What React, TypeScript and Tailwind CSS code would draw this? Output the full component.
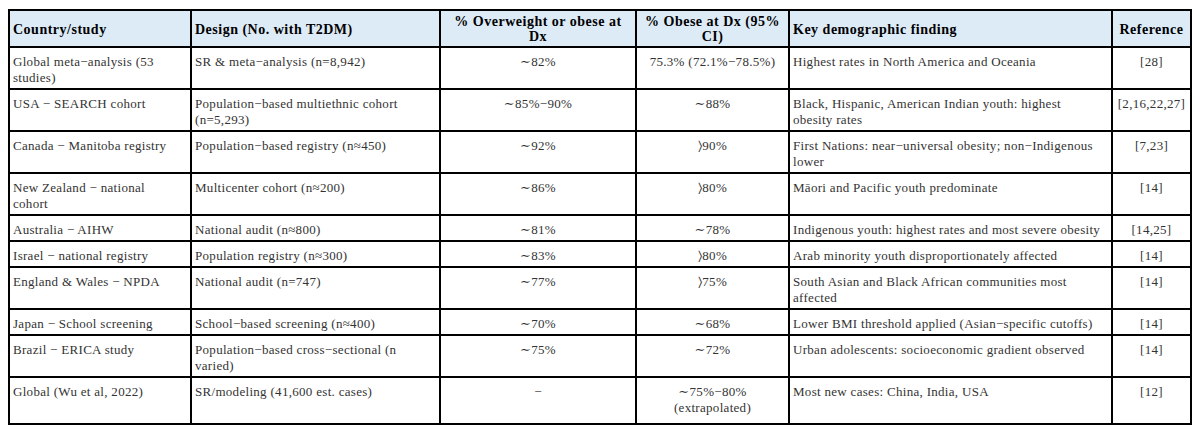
const gt = "\u232A";

const rows: { country: string; design: string; over: string; obese: string; finding: string; ref: string }[] = [
  {
    country: "Global meta−analysis (53\nstudies)",
    design: "SR & meta−analysis (n=8,942)",
    over: "∼82%",
    obese: "75.3% (72.1%−78.5%)",
    finding: "Highest rates in North America and Oceania",
    ref: "[28]",
  },
  {
    country: "USA − SEARCH cohort",
    design: "Population−based multiethnic cohort\n(n=5,293)",
    over: "∼85%−90%",
    obese: "∼88%",
    finding: "Black, Hispanic, American Indian youth: highest\nobesity rates",
    ref: "[2,16,22,27]",
  },
  {
    country: "Canada − Manitoba registry",
    design: "Population−based registry (n≈450)",
    over: "∼92%",
    obese: `${gt}90%`,
    finding: "First Nations: near−universal obesity; non−Indigenous\nlower",
    ref: "[7,23]",
  },
  {
    country: "New Zealand − national\ncohort",
    design: "Multicenter cohort (n≈200)",
    over: "∼86%",
    obese: `${gt}80%`,
    finding: "Māori and Pacific youth predominate",
    ref: "[14]",
  },
  {
    country: "Australia − AIHW",
    design: "National audit (n≈800)",
    over: "∼81%",
    obese: "∼78%",
    finding: "Indigenous youth: highest rates and most severe obesity",
    ref: "[14,25]",
  },
  {
    country: "Israel − national registry",
    design: "Population registry (n≈300)",
    over: "∼83%",
    obese: `${gt}80%`,
    finding: "Arab minority youth disproportionately affected",
    ref: "[14]",
  },
  {
    country: "England & Wales − NPDA",
    design: "National audit (n=747)",
    over: "∼77%",
    obese: `${gt}75%`,
    finding: "South Asian and Black African communities most\naffected",
    ref: "[14]",
  },
  {
    country: "Japan − School screening",
    design: "School−based screening (n≈400)",
    over: "∼70%",
    obese: "∼68%",
    finding: "Lower BMI threshold applied (Asian−specific cutoffs)",
    ref: "[14]",
  },
  {
    country: "Brazil − ERICA study",
    design: "Population−based cross−sectional (n\nvaried)",
    over: "∼75%",
    obese: "∼72%",
    finding: "Urban adolescents: socioeconomic gradient observed",
    ref: "[14]",
  },
  {
    country: "Global (Wu et al, 2022)",
    design: "SR/modeling (41,600 est. cases)",
    over: "−",
    obese: "∼75%−80%\n(extrapolated)",
    finding: "Most new cases: China, India, USA",
    ref: "[12]",
  },
];

export default function App() {
  const th = "border-2 border-black bg-[#ddebf7] px-[3px] pt-[3px] pb-[2px] align-middle font-bold text-[14px] leading-[15px] tracking-[0.5px] text-black whitespace-pre-line";
  const td = "border-2 border-black px-[3px] pt-[6px] pb-[2px] align-top text-[13px] leading-[16px] tracking-[0.3px] text-[#333] whitespace-pre-line";

  return (
    <div className="min-h-screen bg-white pt-[9px] pl-[8px]" style={{ fontFamily: '"Liberation Serif", "DejaVu Serif", serif' }}>
      <table className="table-fixed border-collapse w-[1182px]">
        <colgroup>
          <col className="w-[182px]" />
          <col className="w-[249px]" />
          <col className="w-[196px]" />
          <col className="w-[153px]" />
          <col className="w-[323px]" />
          <col className="w-[79px]" />
        </colgroup>
        <thead>
          <tr className="h-[37px]">
            <th className={`${th} text-left`}>Country/study</th>
            <th className={`${th} text-left`}>Design (No. with T2DM)</th>
            <th className={`${th} text-center`}>{"% Overweight or obese at\nDx"}</th>
            <th className={`${th} text-center`}>{"% Obese at Dx (95%\nCI)"}</th>
            <th className={`${th} text-left`}>Key demographic finding</th>
            <th className={`${th} text-center`}>Reference</th>
          </tr>
        </thead>
        <tbody>
          {rows.map((r, i) => (
            <tr key={i} className={i === rows.length - 1 ? "h-[47px]" : ""}>
              <td className={`${td} text-left`}>{r.country}</td>
              <td className={`${td} text-left`}>{r.design}</td>
              <td className={`${td} text-center`}>{r.over}</td>
              <td className={`${td} text-center`}>{r.obese}</td>
              <td className={`${td} text-left`}>{r.finding}</td>
              <td className={`${td} text-center`}>{r.ref}</td>
            </tr>
          ))}
        </tbody>
      </table>
    </div>
  );
}
